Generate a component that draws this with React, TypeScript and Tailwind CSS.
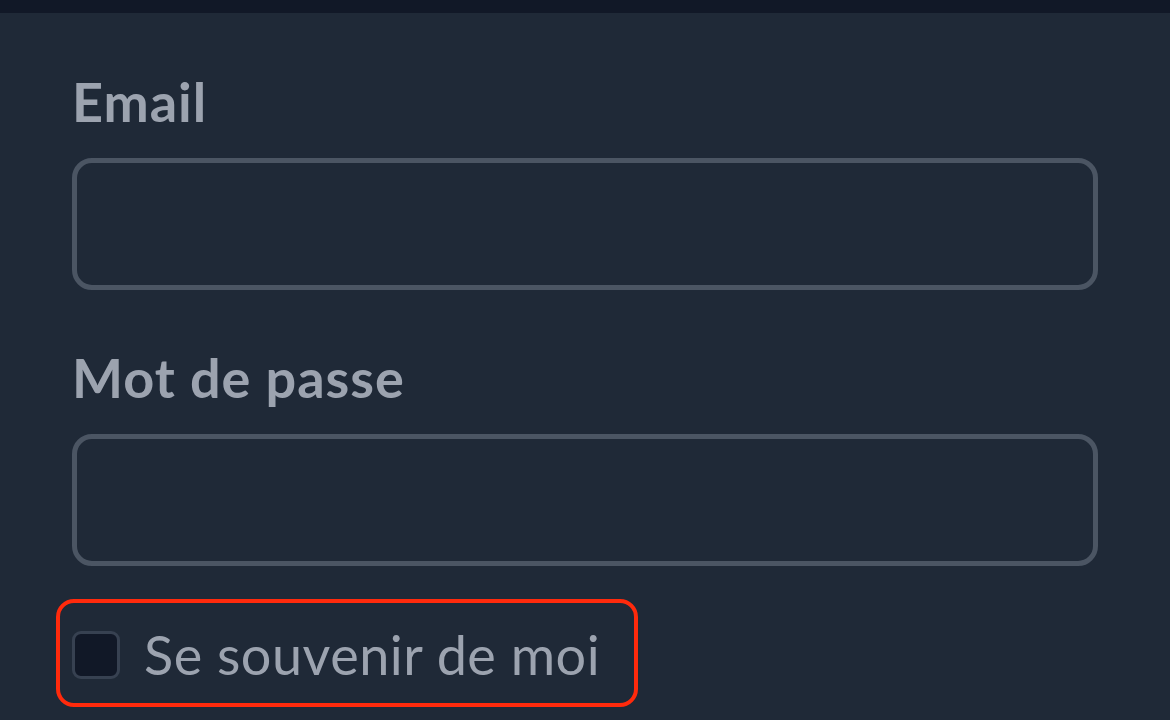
const Field = ({ label, type, top }: { label: string; type: string; top: string }) => (
    <div className={`flex flex-col ${top}`}>
        <label className="text-[54px] leading-none font-bold tracking-[1px] text-[#9ca3af]">{label}</label>
        <input
            type={type}
            className="mt-[29px] h-[132px] w-full rounded-[20px] border-[5px] border-[#4b5563] bg-transparent px-6 text-[48px] text-gray-200 outline-none"
        />
    </div>
);

const App = () => {
    return (
        <div className="min-h-[720px] bg-[#1f2937] font-['Lato',sans-serif]">
            <div className="h-[13px] bg-[#111827]" />
            <div className="px-[72px]">
                <Field label="Email" type="email" top="mt-[62px]" />
                <Field label="Mot de passe" type="password" top="mt-[61px]" />
                <div className="relative mt-[62px] flex items-center gap-[24px]">
                    <div className="pointer-events-none absolute -top-[29px] -bottom-[25px] -left-[16px] w-[582px] rounded-[18px] border-[4px] border-[#ff2a0c]" />
                    <span className="h-[48px] w-[48px] rounded-[9px] border-[3px] border-[#374151] bg-[#111827]" />
                    <span className="text-[54px] leading-none tracking-[0.5px] text-[#9ca3af]">Se souvenir de moi</span>
                </div>
            </div>
        </div>
    );
};

export default App;
